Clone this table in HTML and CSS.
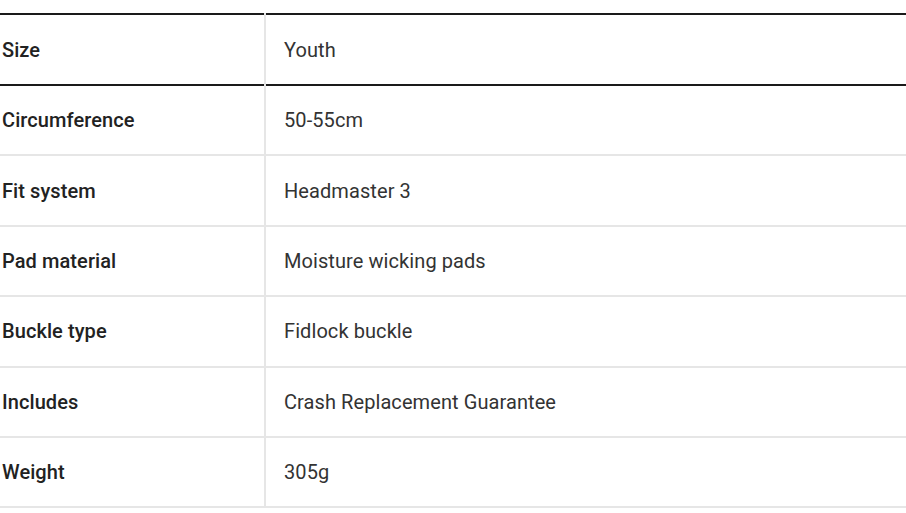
FILE: index.html
```html
<!DOCTYPE html>
<html>
<head>
<meta charset="utf-8">
<link rel="stylesheet" href="styles.css">
</head>
<body>
<table class="specs">
  <thead>
    <tr><th class="label">Size</th><th class="value">Youth</th></tr>
  </thead>
  <tbody>
    <tr><td class="label">Circumference</td><td class="value">50-55cm</td></tr>
    <tr><td class="label">Fit system</td><td class="value">Headmaster 3</td></tr>
    <tr><td class="label">Pad material</td><td class="value">Moisture wicking pads</td></tr>
    <tr><td class="label">Buckle type</td><td class="value">Fidlock buckle</td></tr>
    <tr><td class="label">Includes</td><td class="value">Crash Replacement Guarantee</td></tr>
    <tr><td class="label">Weight</td><td class="value">305g</td></tr>
  </tbody>
</table>
</body>
</html>
```
FILE: styles.css
```css
html, body {
  margin: 0;
  padding: 0;
  background: #fff;
}
body {
  padding-top: 13px;
  font-family: Roboto, "Liberation Sans", sans-serif;
  font-size: 20px;
  letter-spacing: 0.08px;
  color: #333;
}
.specs {
  width: 906px;
  border-collapse: collapse;
  border-top: 2px solid #1a1a1a;
}
.specs thead tr {
  border-bottom: 2px solid #1a1a1a;
}
.specs tbody tr {
  border-bottom: 2px solid #e6e6e6;
}
.specs th, .specs td {
  text-align: left;
  padding: 0;
  vertical-align: middle;
}
.specs thead th {
  height: 69px;
}
.specs tbody td {
  height: 68.4px;
}
.label {
  width: 262px;
  padding-left: 2px !important;
  font-weight: 500;
  color: #222;
  border-right: 2px solid #e6e6e6;
}
.value {
  padding-left: 18px !important;
  font-weight: 400;
  color: #333;
}
```
